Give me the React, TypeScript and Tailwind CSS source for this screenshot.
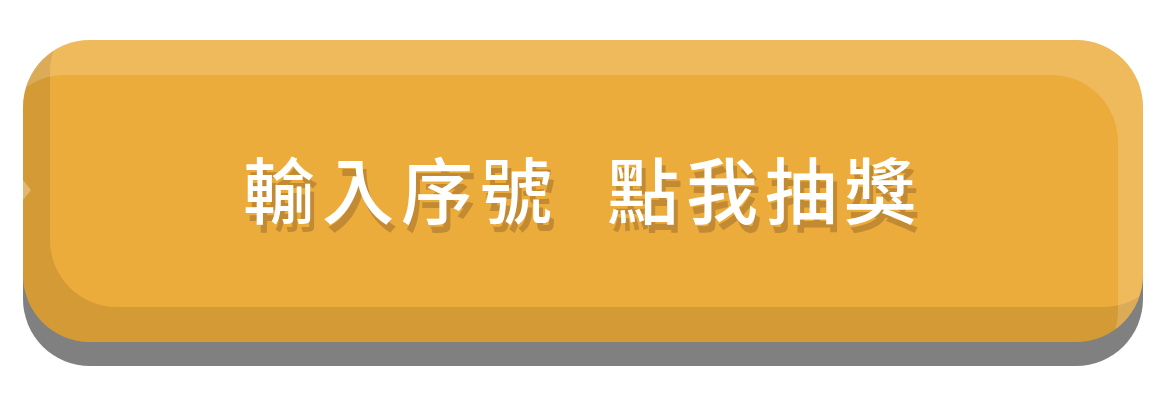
import React from 'react'

export default function App() {
  return (
    <div className="w-full h-[400px] bg-white pt-[40px] pl-[23px]">
      <button
        type="button"
        className="relative w-[1120px] h-[302px] rounded-[67px] bg-[#ecac3b] shadow-[inset_-25px_35px_0_rgba(255,255,255,0.17),inset_27px_-35px_0_rgba(0,0,0,0.1),0_24px_0_#808080] flex items-center justify-center pb-[8px]"
      >
        {/* little notch on the left edge */}
        <span className="absolute left-0 top-[140px] w-0 h-0 border-y-[10px] border-y-transparent border-l-[8px] border-l-white/30" />
        <span
          className="flex gap-[48px] text-[72px] leading-none font-medium tracking-[7px] text-white [text-shadow:4px_8px_0_#c28a33]"
          style={{ fontFamily: '"Noto Sans CJK TC", "Noto Sans CJK SC", sans-serif' }}
        >
          <span>輸入序號</span>
          <span>點我抽獎</span>
        </span>
      </button>
    </div>
  )
}
